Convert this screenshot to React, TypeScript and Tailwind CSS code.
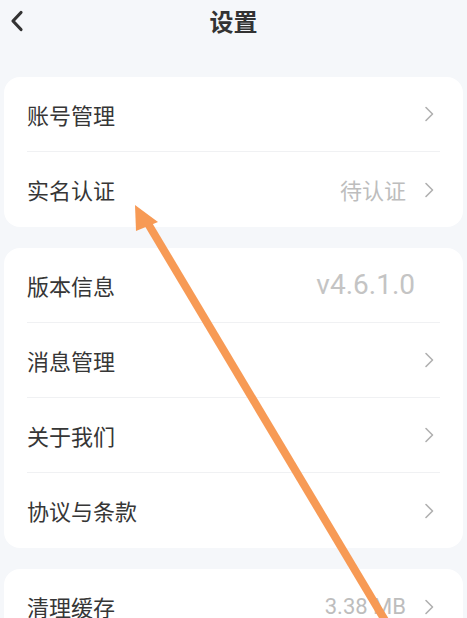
import type { ReactNode } from 'react';

const Chevron = () => (
  <svg width="10" height="16" viewBox="0 0 10 16" className="shrink-0">
    <path d="M2 1.5 L8.5 8 L2 14.5" fill="none" stroke="#b0b0b0" strokeWidth="1.6" strokeLinecap="round" strokeLinejoin="round" />
  </svg>
);

type RowProps = {
  label: string;
  value?: ReactNode;
  arrow?: boolean;
  last?: boolean;
};

const Row = ({ label, value, arrow = true, last }: RowProps) => (
  <div className="px-[23px]">
    <div className={`flex h-[75px] items-center ${last ? '' : 'border-b border-[#f0f1f3]'}`}>
      <span className="flex-1 text-[22px] text-[#363636]">{label}</span>
      {value}
      {arrow && <div className="ml-[18px] mr-[6px]"><Chevron /></div>}
    </div>
  </div>
);

export default function App() {
  return (
    <div
      className="relative h-[618px] w-[467px] overflow-hidden bg-[#f5f7fa]"
      style={{ fontFamily: '"Noto Sans CJK SC", "Noto Sans", sans-serif' }}
    >
      <div className="relative flex h-[42px] items-center justify-center">
        <button className="absolute left-[8px] top-[8px] p-[2px]">
          <svg width="14" height="22" viewBox="0 0 14 22">
            <path d="M11 2.5 L3 11 L11 19.5" fill="none" stroke="#333" strokeWidth="3.2" strokeLinecap="round" strokeLinejoin="round" />
          </svg>
        </button>
        <h1 className="text-[24px] font-bold text-[#333]">设置</h1>
      </div>

      <div className="mt-[35px] flex flex-col gap-[21px] px-[4px]">
        <div className="rounded-[16px] bg-white">
          <Row label="账号管理" />
          <Row label="实名认证" last value={<span className="text-[22px] text-[#bdbdbd]">待认证</span>} />
        </div>

        <div className="rounded-[16px] bg-white">
          <Row
            label="版本信息"
            arrow={false}
            value={
              <span className="mr-[25px] text-[28px] text-[#c4c4c4]" style={{ fontFamily: 'Roboto, sans-serif' }}>
                v4.6.1.0
              </span>
            }
          />
          <Row label="消息管理" />
          <Row label="关于我们" />
          <Row label="协议与条款" last />
        </div>

        <div className="rounded-[16px] bg-white">
          <Row
            label="清理缓存"
            last
            value={
              <span className="text-[22px] text-[#bdbdbd]" style={{ fontFamily: 'Roboto, sans-serif' }}>
                3.38 MB
              </span>
            }
          />
        </div>
      </div>

      <svg className="pointer-events-none absolute inset-0" width="467" height="618" viewBox="0 0 467 618">
        <line x1="147" y1="222" x2="386" y2="622" stroke="#f79a55" strokeWidth="8" />
        <polygon points="135,205 136,231 158,222" fill="#f79a55" />
      </svg>
    </div>
  );
}
